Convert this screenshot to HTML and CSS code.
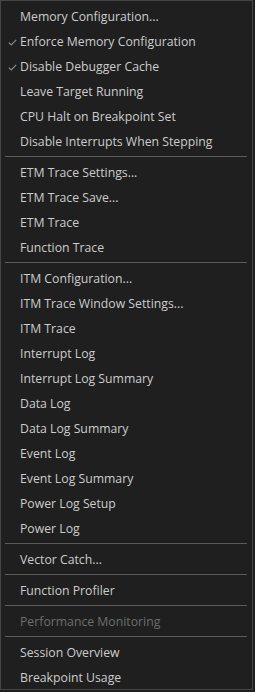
FILE: index.html
```html
<!DOCTYPE html>
<html lang="en">
<head>
  <meta charset="UTF-8">
  <title>Debug Menu</title>
  <link rel="stylesheet" href="styles.css">
</head>
<body>

  <div class="menu">
    <div class="item">Memory Configuration...</div>
    <div class="item checked">
      <svg class="check" width="9" height="7" viewBox="0 0 9 7"><path d="M0.8 3.6 L3.2 5.9 L8.2 0.8" fill="none" stroke="#8a8a8a" stroke-width="1.2"/></svg>
      Enforce Memory Configuration
    </div>
    <div class="item checked">
      <svg class="check" width="9" height="7" viewBox="0 0 9 7"><path d="M0.8 3.6 L3.2 5.9 L8.2 0.8" fill="none" stroke="#8a8a8a" stroke-width="1.2"/></svg>
      Disable Debugger Cache
    </div>
    <div class="item">Leave Target Running</div>
    <div class="item">CPU Halt on Breakpoint Set</div>
    <div class="item">Disable Interrupts When Stepping</div>
    <div class="sep"></div>
    <div class="item">ETM Trace Settings...</div>
    <div class="item">ETM Trace Save...</div>
    <div class="item">ETM Trace</div>
    <div class="item">Function Trace</div>
    <div class="sep"></div>
    <div class="item">ITM Configuration...</div>
    <div class="item">ITM Trace Window Settings...</div>
    <div class="item">ITM Trace</div>
    <div class="item">Interrupt Log</div>
    <div class="item">Interrupt Log Summary</div>
    <div class="item">Data Log</div>
    <div class="item">Data Log Summary</div>
    <div class="item">Event Log</div>
    <div class="item">Event Log Summary</div>
    <div class="item">Power Log Setup</div>
    <div class="item">Power Log</div>
    <div class="sep"></div>
    <div class="item">Vector Catch...</div>
    <div class="sep"></div>
    <div class="item">Function Profiler</div>
    <div class="sep"></div>
    <div class="item disabled">Performance Monitoring</div>
    <div class="sep"></div>
    <div class="item">Session Overview</div>
    <div class="item">Breakpoint Usage</div>
  </div>

</body>
</html>
```

FILE: styles.css
```css
body {
  margin: 0;
  background-color: #1f1f1f;
}
.menu {
  width: 253px;
  height: 690px;
  padding-top: 3px;
  box-sizing: border-box;
  border: 1px solid #454545;
  background-color: #1f1f1f;
  font-family: "Open Sans", sans-serif;
  font-size: 12.25px;
  color: #cccccc;
}
.item {
  position: relative;
  height: 25px;
  line-height: 25px;
  padding-left: 19px;
  white-space: nowrap;
}
.check {
  position: absolute;
  left: 7px;
  top: 10px;
}
.disabled {
  color: #6e6e6e;
}
.sep {
  height: 1px;
  margin: 2px 5px 3px 4px;
  background-color: #5a5a5a;
}
```
